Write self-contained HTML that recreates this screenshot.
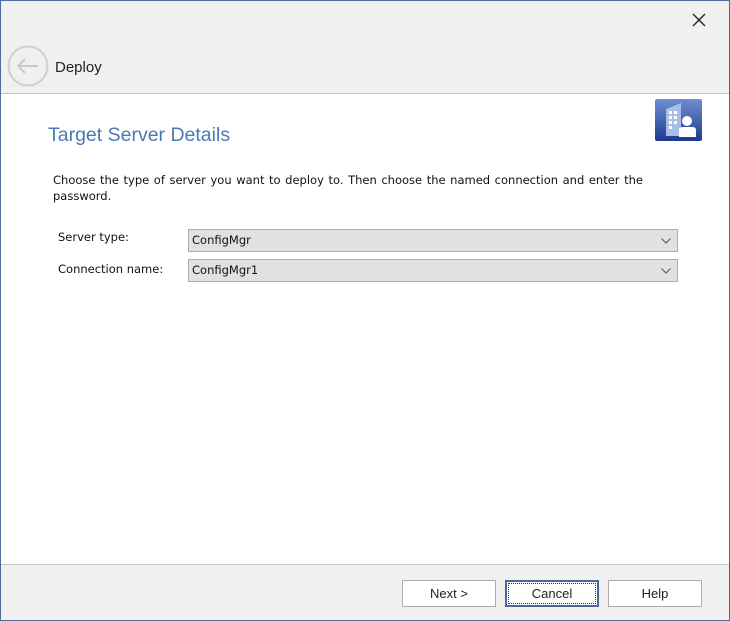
<!DOCTYPE html>
<html><head><style>
*{margin:0;padding:0;box-sizing:border-box}
body{width:730px;height:621px;overflow:hidden;font-family:"Liberation Sans",sans-serif;background:#fff;position:relative}
.win{position:absolute;left:0;top:0;width:730px;height:621px;border:1px solid #4d6b9c}
.hdr{position:absolute;left:1px;top:1px;width:728px;height:93px;background:#f0f0f0;border-bottom:1px solid #c8c8c8}
.ftr{position:absolute;left:1px;top:564px;width:728px;height:56px;background:#f0f0f0;border-top:1px solid #c8c8c8}
.abs{position:absolute}
.btn{position:absolute;top:580px;width:94px;height:27px;border:1px solid #adadad;background:#fff;font-size:13px;text-align:center;line-height:25px;color:#222}
.combo{position:absolute;left:188px;width:490px;height:23px;background:#e1e1e1;border:1px solid #adadad;font-family:"DejaVu Sans",sans-serif;font-size:11.5px;line-height:21px;padding-left:3px;color:#111}
.lbl{position:absolute;left:58px;font-family:"DejaVu Sans",sans-serif;font-size:11.5px;color:#111}
</style></head><body>
<div class="win"></div>
<div class="hdr"></div>
<div class="ftr"></div>
<svg class="abs" style="left:691px;top:12px" width="16" height="16"><path d="M2 2L14 14M14 2L2 14" stroke="#222" stroke-width="1.4"/></svg>
<svg class="abs" style="left:7px;top:45px" width="44" height="44"><circle cx="21" cy="21" r="19.5" fill="none" stroke="#cfcfcf" stroke-width="2"/><path d="M11 21H31M11 21L18 14M11 21L18 28" fill="none" stroke="#c8c8c8" stroke-width="2"/></svg>
<div class="abs" style="left:55px;top:59px;font-size:15px;color:#222">Deploy</div>
<div class="abs" style="left:48px;top:124px;font-size:19.5px;color:#4a78b4">Target Server Details</div>
<svg class="abs" style="left:655px;top:99px" width="47" height="42"><defs><linearGradient id="g" x1="0" y1="0" x2="0" y2="1"><stop offset="0" stop-color="#6f8fd0"/><stop offset="1" stop-color="#1d3a8f"/></linearGradient></defs><rect width="47" height="42" rx="2" fill="url(#g)"/><path d="M11 10L26 4V37H11Z" fill="#a9bde8"/><g fill="#fff"><rect x="14" y="12" width="3" height="3"/><rect x="19" y="12" width="3" height="3"/><rect x="14" y="17" width="3" height="3"/><rect x="19" y="17" width="3" height="3"/><rect x="14" y="22" width="3" height="3"/><rect x="19" y="22" width="3" height="3"/><rect x="14" y="27" width="3" height="3"/><circle cx="32" cy="22" r="5"/><path d="M24 38V31Q24 28 28 28H37Q41 28 41 31V38Z"/></g></svg>
<div class="abs" style="left:53px;top:172px;width:590px;font-family:'DejaVu Sans',sans-serif;font-size:11.5px;line-height:16px;color:#111;text-align:justify;text-align-last:left">Choose the type of server you want to deploy to. Then choose the named connection and enter the password.</div>
<div class="lbl" style="top:230px">Server type:</div>
<div class="lbl" style="top:262px">Connection name:</div>
<div class="combo" style="top:229px">ConfigMgr</div>
<div class="combo" style="top:259px">ConfigMgr1</div>
<svg class="abs" style="left:661px;top:238px" width="10" height="6"><path d="M0.5 0.5L5 5L9.5 0.5" fill="none" stroke="#555"/></svg>
<svg class="abs" style="left:661px;top:268px" width="10" height="6"><path d="M0.5 0.5L5 5L9.5 0.5" fill="none" stroke="#555"/></svg>
<div class="btn" style="left:402px">Next &gt;</div>
<div class="btn" style="left:505px;border:2px solid #4a6a9e;line-height:23px"><span style="outline:1px dotted #333;display:inline-block;width:86px;line-height:19px">Cancel</span></div>
<div class="btn" style="left:608px">Help</div>
</body></html>
